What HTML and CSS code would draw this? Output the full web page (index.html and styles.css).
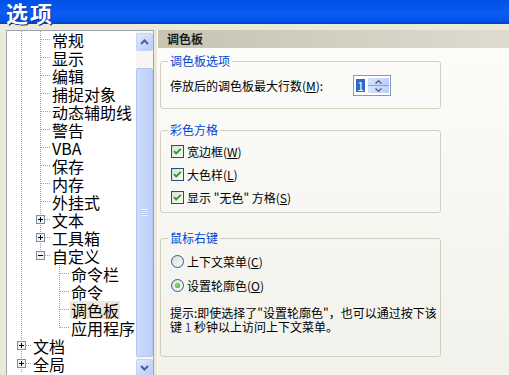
FILE: index.html
```html
<!DOCTYPE html>
<html lang="zh-CN">
<head>
  <meta charset="UTF-8">
  <meta name="viewport" content="width=device-width, initial-scale=1.0">
  <title>选项</title>
  <link rel="stylesheet" href="styles.css">
</head>
<body>
  <div class="window">
    <div class="titlebar">选项</div>
    <div class="client">
      <!-- left: category tree -->
      <div class="tree">
        <ul class="tree-list">
          <li class="row"><span class="cell line"></span><span class="cell tee"></span><span class="label">常规</span></li>
          <li class="row"><span class="cell line"></span><span class="cell tee"></span><span class="label">显示</span></li>
          <li class="row"><span class="cell line"></span><span class="cell tee"></span><span class="label">编辑</span></li>
          <li class="row"><span class="cell line"></span><span class="cell tee"></span><span class="label">捕捉对象</span></li>
          <li class="row"><span class="cell line"></span><span class="cell tee"></span><span class="label">动态辅助线</span></li>
          <li class="row"><span class="cell line"></span><span class="cell tee"></span><span class="label">警告</span></li>
          <li class="row"><span class="cell line"></span><span class="cell tee"></span><span class="label">VBA</span></li>
          <li class="row"><span class="cell line"></span><span class="cell tee"></span><span class="label">保存</span></li>
          <li class="row"><span class="cell line"></span><span class="cell tee"></span><span class="label">内存</span></li>
          <li class="row"><span class="cell line"></span><span class="cell tee"></span><span class="label">外挂式</span></li>
          <li class="row">
            <span class="cell line"></span>
            <span class="cell tee"><svg class="expander" width="9" height="9" viewBox="0 0 9 9" shape-rendering="crispEdges"><rect x="0.5" y="0.5" width="8" height="8" fill="#f4f3ee" stroke="#7b8fa8"/><path d="M2 4.5H7M4.5 2V7" stroke="#000"/></svg></span>
            <span class="label">文本</span>
          </li>
          <li class="row">
            <span class="cell line"></span>
            <span class="cell tee"><svg class="expander" width="9" height="9" viewBox="0 0 9 9" shape-rendering="crispEdges"><rect x="0.5" y="0.5" width="8" height="8" fill="#f4f3ee" stroke="#7b8fa8"/><path d="M2 4.5H7M4.5 2V7" stroke="#000"/></svg></span>
            <span class="label">工具箱</span>
          </li>
          <li class="row">
            <span class="cell line"></span>
            <span class="cell end"><svg class="expander" width="9" height="9" viewBox="0 0 9 9" shape-rendering="crispEdges"><rect x="0.5" y="0.5" width="8" height="8" fill="#f4f3ee" stroke="#7b8fa8"/><path d="M2 4.5H7" stroke="#000"/></svg></span>
            <span class="label">自定义</span>
          </li>
          <li class="row"><span class="cell line"></span><span class="cell"></span><span class="cell tee"></span><span class="label">命令栏</span></li>
          <li class="row"><span class="cell line"></span><span class="cell"></span><span class="cell tee"></span><span class="label">命令</span></li>
          <li class="row"><span class="cell line"></span><span class="cell"></span><span class="cell tee"></span><span class="label selected">调色板</span></li>
          <li class="row"><span class="cell line"></span><span class="cell"></span><span class="cell end"></span><span class="label">应用程序</span></li>
          <li class="row">
            <span class="cell tee"><svg class="expander" width="9" height="9" viewBox="0 0 9 9" shape-rendering="crispEdges"><rect x="0.5" y="0.5" width="8" height="8" fill="#f4f3ee" stroke="#7b8fa8"/><path d="M2 4.5H7M4.5 2V7" stroke="#000"/></svg></span>
            <span class="label">文档</span>
          </li>
          <li class="row">
            <span class="cell tee"><svg class="expander" width="9" height="9" viewBox="0 0 9 9" shape-rendering="crispEdges"><rect x="0.5" y="0.5" width="8" height="8" fill="#f4f3ee" stroke="#7b8fa8"/><path d="M2 4.5H7M4.5 2V7" stroke="#000"/></svg></span>
            <span class="label">全局</span>
          </li>
        </ul>
        <div class="scrollbar">
          <div class="sb-btn">
            <svg width="9" height="6" viewBox="0 0 9 6"><path d="M1 5L4.5 1.5L8 5" fill="none" stroke="#4d6185" stroke-width="2"/></svg>
          </div>
          <div class="sb-track">
            <div class="sb-thumb"><span class="grip"></span></div>
          </div>
          <div class="sb-btn">
            <svg width="9" height="6" viewBox="0 0 9 6"><path d="M1 1L4.5 4.5L8 1" fill="none" stroke="#4d6185" stroke-width="2"/></svg>
          </div>
        </div>
      </div>

      <!-- right: settings page -->
      <div class="page">
        <div class="page-head">调色板</div>

        <fieldset class="group group-palette">
          <legend class="group-title">调色板选项</legend>
          <div class="spin-row">
            <span class="spin-label">停放后的调色板最大行数(<u>M</u>):</span>
            <div class="spinner">
              <span class="spin-value">1</span>
              <div class="spin-btns">
                <span class="spin-btn"><svg width="7" height="4" viewBox="0 0 7 4"><path d="M0.5 3.5L3.5 0.8L6.5 3.5" fill="none" stroke="#4d6185" stroke-width="1.4"/></svg></span>
                <span class="spin-btn lower"><svg width="7" height="4" viewBox="0 0 7 4"><path d="M0.5 0.5L3.5 3.2L6.5 0.5" fill="none" stroke="#4d6185" stroke-width="1.4"/></svg></span>
              </div>
            </div>
          </div>
        </fieldset>

        <fieldset class="group group-swatch">
          <legend class="group-title">彩色方格</legend>
          <div class="option-list">
            <div class="option">
              <span class="checkbox"><svg width="11" height="11" viewBox="0 0 11 11"><path d="M2 5.2L4.2 7.5L8.8 2.8" fill="none" stroke="#21a121" stroke-width="1.9"/></svg></span>
              <span>宽边框(<u>W</u>)</span>
            </div>
            <div class="option">
              <span class="checkbox"><svg width="11" height="11" viewBox="0 0 11 11"><path d="M2 5.2L4.2 7.5L8.8 2.8" fill="none" stroke="#21a121" stroke-width="1.9"/></svg></span>
              <span>大色样(<u>L</u>)</span>
            </div>
            <div class="option">
              <span class="checkbox"><svg width="11" height="11" viewBox="0 0 11 11"><path d="M2 5.2L4.2 7.5L8.8 2.8" fill="none" stroke="#21a121" stroke-width="1.9"/></svg></span>
              <span>显示 "无色" 方格(<u>S</u>)</span>
            </div>
          </div>
        </fieldset>

        <fieldset class="group group-mouse">
          <legend class="group-title">鼠标右键</legend>
          <div class="option-list radios">
            <div class="option">
              <span class="radio"></span>
              <span>上下文菜单(<u>C</u>)</span>
            </div>
            <div class="option">
              <span class="radio"><span class="dot"></span></span>
              <span>设置轮廓色(<u>O</u>)</span>
            </div>
          </div>
          <p class="hint">提示:即使选择了"设置轮廓色"，也可以通过按下该<br>键 <span class="num">1</span> 秒钟以上访问上下文菜单。</p>
        </fieldset>
      </div>
    </div>
  </div>
</body>
</html>
```

FILE: styles.css
```css
body {
  margin: 0;
  background-color: #ece9d8;
  font-family: "Noto Sans CJK SC", "Noto Sans", sans-serif;
  font-size: 12px;
  color: #000;
  overflow: hidden;
}

.window {
  width: 509px;
  height: 375px;
  overflow: hidden;
  background-color: #ece9d8;
}

.titlebar {
  height: 24px;
  padding-left: 6px;
  background: linear-gradient(#0050e8, #0a5cf3 55%, #0054ea 85%, #0040c4);
  color: #fff;
  font-size: 22px;
  font-weight: bold;
  letter-spacing: 2px;
  line-height: 24px;
  text-shadow: 1px 1px 0 #0b2a8a;
}

.client {
  display: flex;
  align-items: flex-start;
  padding: 6px 0 0 6px;
}

/* tree */
.tree {
  display: flex;
  flex-shrink: 0;
  width: 148px;
  height: 348px;
  box-sizing: border-box;
  border: 1px solid #9aa5b1;
  background-color: #fff;
  overflow: hidden;
}

.tree-list {
  list-style: none;
  margin: 0;
  padding: 0 0 0 5px;
  flex: 1;
  min-width: 0;
  font-size: 16px;
  line-height: 18px;
}

.row {
  display: flex;
  height: 18px;
}

.cell {
  display: flex;
  align-items: flex-start;
  flex-shrink: 0;
  width: 19px;
  height: 18px;
}

.cell.line {
  background: repeating-linear-gradient(to bottom, #a0a0a0 0 1px, transparent 1px 2px) 9px 0 / 1px 100% no-repeat;
}

.cell.tee {
  background:
    repeating-linear-gradient(to right, #a0a0a0 0 1px, transparent 1px 2px) 10px 8px / 9px 1px no-repeat,
    repeating-linear-gradient(to bottom, #a0a0a0 0 1px, transparent 1px 2px) 9px 0 / 1px 100% no-repeat;
}

.cell.end {
  background:
    repeating-linear-gradient(to right, #a0a0a0 0 1px, transparent 1px 2px) 10px 8px / 9px 1px no-repeat,
    repeating-linear-gradient(to bottom, #a0a0a0 0 1px, transparent 1px 2px) 9px 0 / 1px 9px no-repeat;
}

.expander {
  display: block;
  margin: 4px 0 0 5px;
}

.label {
  margin-left: 1px;
  padding: 0 1px;
  white-space: nowrap;
}

.label.selected {
  background-color: #ece9dc;
}

/* scrollbar */
.scrollbar {
  display: flex;
  flex-direction: column;
  flex-shrink: 0;
  width: 17px;
  padding-top: 2px;
  box-sizing: border-box;
  background-color: #f7f6f1;
}

.sb-btn {
  display: flex;
  align-items: center;
  justify-content: center;
  height: 18px;
  box-sizing: border-box;
  border: 1px solid #c3d3fd;
  border-radius: 2px;
  background: linear-gradient(135deg, #e0e9fe, #b7cbfa);
}

.sb-track {
  flex: 1;
  padding-top: 17px;
}

.sb-thumb {
  display: flex;
  align-items: center;
  justify-content: center;
  height: 289px;
  box-sizing: border-box;
  border: 1px solid #b1c6f6;
  border-radius: 2px;
  background: linear-gradient(to right, #cedcfd, #bccffb);
}

.grip {
  width: 7px;
  height: 7px;
  background: repeating-linear-gradient(to bottom, #eef3fe 0 1px, #a9c1f3 1px 2px);
}

/* settings page */
.page {
  flex: 1;
  height: 360px;
  margin-left: 3px;
  border-left: 1px solid #fff;
  background: linear-gradient(#fcfcfa, #f2f1eb);
}

.page-head {
  height: 18px;
  padding-left: 9px;
  line-height: 18px;
  font-weight: bold;
  color: #1a1a1a;
  background: linear-gradient(to right, #c8c4b3, #d3cfc1 50%, #dedbcf);
}

.group {
  width: 281px;
  min-width: 0;
  box-sizing: border-box;
  margin: 0 0 0 2px;
  padding: 0 8px 12px 9px;
  border: 1px solid #d0d0bf;
  border-radius: 3px;
}

.group-palette {
  margin-top: 5px;
}

.group-swatch {
  margin-top: 13px;
  padding-bottom: 3px;
}

.group-mouse {
  margin-top: 17px;
  padding-bottom: 22px;
}

.group-title {
  margin-left: -2px;
  padding: 0 2px;
  color: #0046d5;
  line-height: 16px;
}

.spin-row {
  display: flex;
  align-items: center;
  height: 21px;
  margin-top: 6px;
}

.spin-label {
  width: 183px;
  flex-shrink: 0;
}

.spinner {
  display: flex;
  align-items: center;
  width: 38px;
  height: 21px;
  box-sizing: border-box;
  padding: 0 1px 0 2px;
  border: 1px solid #7f9db9;
  background-color: #fff;
}

.spin-value {
  width: 9px;
  height: 13px;
  line-height: 13px;
  text-align: center;
  background-color: #316ac5;
  color: #fff;
}

.spin-btns {
  display: flex;
  flex-direction: column;
  width: 21px;
  height: 15px;
  margin-left: 3px;
}

.spin-btn {
  display: flex;
  flex: 1;
  align-items: center;
  justify-content: center;
  background: linear-gradient(135deg, #dbe5fd, #b9cdfa);
}

.spin-btn.lower {
  border-top: 1px solid #a8a089;
}

.option-list {
  margin-top: 2px;
}

.option-list.radios {
  margin-top: 3px;
}

.option {
  display: flex;
  align-items: center;
  height: 23px;
}

.radios .option {
  height: 24px;
}

.checkbox,
.radio {
  display: flex;
  align-items: center;
  justify-content: center;
  flex-shrink: 0;
  width: 13px;
  height: 13px;
  box-sizing: border-box;
  margin: 0 3px 0 1px;
  background: linear-gradient(135deg, #dcdcd7, #fbfbf9);
}

.checkbox {
  border: 1px solid #1c5180;
}

.radio {
  border: 1px solid #2f5a8a;
  border-radius: 50%;
}

.dot {
  width: 5px;
  height: 5px;
  border-radius: 50%;
  background: radial-gradient(circle at 40% 40%, #8ee08e, #21a121);
}

.hint {
  margin: 9px 0 0;
  line-height: 14px;
  white-space: nowrap;
}

.num {
  color: #4a3496;
}
```
